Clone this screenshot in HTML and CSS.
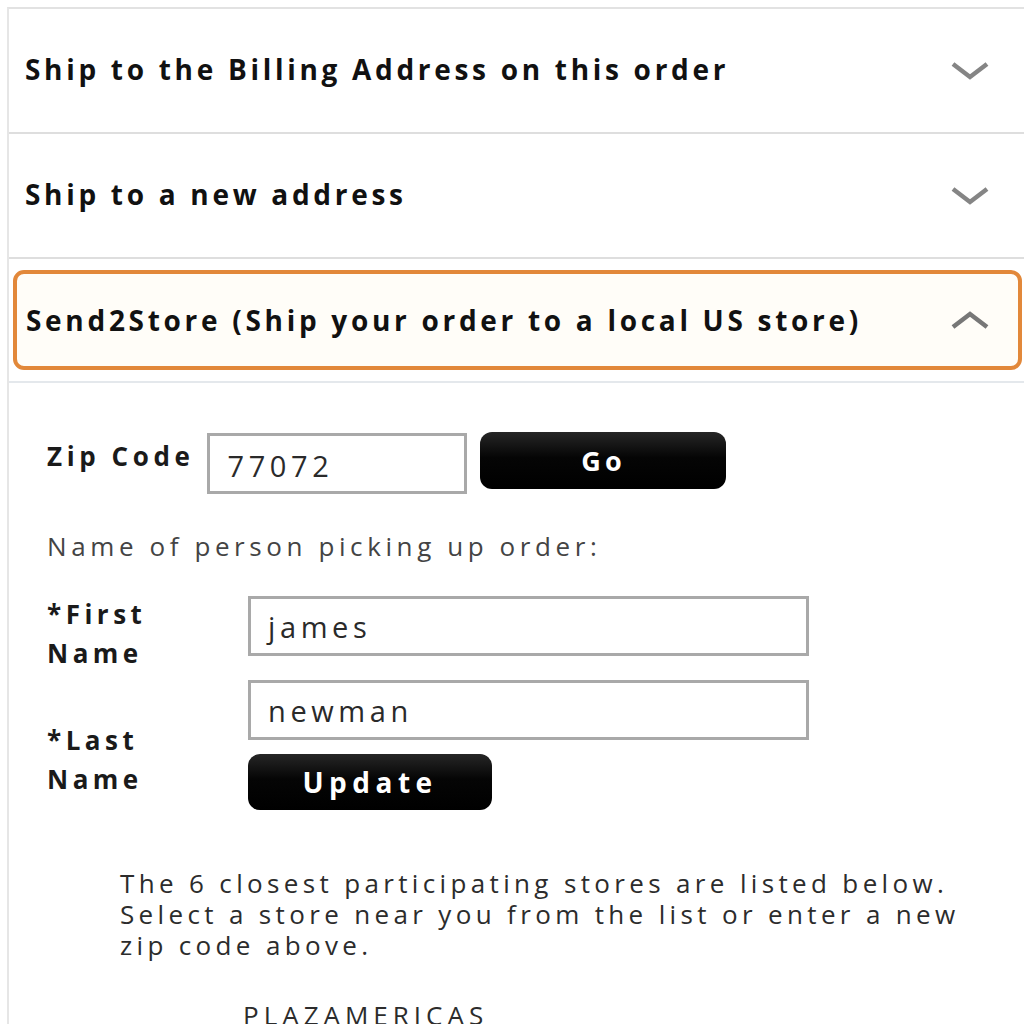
FILE: index.html
```html
<!DOCTYPE html>
<html>
<head>
<meta charset="utf-8">
<link rel="stylesheet" href="styles.css">
</head>
<body>
<div class="page">
  <div class="acc-row">
    <span class="acc-title">Ship to the Billing Address on this order</span>
    <svg class="chev" width="40" height="22" viewBox="0 0 40 22"><path d="M3 4 L20 17 L37 4" fill="none" stroke="#858585" stroke-width="4.5"/></svg>
  </div>
  <div class="acc-row">
    <span class="acc-title">Ship to a new address</span>
    <svg class="chev" width="40" height="22" viewBox="0 0 40 22"><path d="M3 4 L20 17 L37 4" fill="none" stroke="#858585" stroke-width="4.5"/></svg>
  </div>
  <div class="acc-active-wrap">
    <div class="acc-active">
      <span class="acc-title">Send2Store (Ship your order to a local US store)</span>
      <svg class="chev up" width="40" height="22" viewBox="0 0 40 22"><path d="M3 18 L20 5 L37 18" fill="none" stroke="#777" stroke-width="4.5"/></svg>
    </div>
  </div>
  <div class="content">
    <div class="zip-row">
      <span class="label">Zip Code</span>
      <div class="input zip">77072</div>
      <div class="btn go">Go</div>
    </div>
    <div class="hint">Name of person picking up order:</div>
    <div class="name-grid">
      <div class="label first">*First<br>Name</div>
      <div class="input name">james</div>
      <div class="label last">*Last<br>Name</div>
      <div class="last-col">
        <div class="input name">newman</div>
        <div class="btn update">Update</div>
      </div>
    </div>
    <p class="info">The 6 closest participating stores are listed below.<br>Select a store near you from the list or enter a new<br>zip code above.</p>
    <div class="store">PLAZAMERICAS</div>
  </div>
</div>
</body>
</html>
```

FILE: styles.css
```css
html, body {
  margin: 0;
  padding: 0;
  background: #fff;
  overflow: hidden;
}
body {
  font-family: "Open Sans", "DejaVu Sans", sans-serif;
  color: #1a1a1a;
}
.page {
  margin: 7px 0 0 7px;
  border-top: 2px solid #e2e2e2;
  border-left: 2px solid #e6e6e6;
  height: 1100px;
}
.acc-row {
  height: 123px;
  border-bottom: 2px solid #dedede;
  display: flex;
  align-items: center;
  justify-content: space-between;
  padding: 0 34px 0 16px;
}
.acc-title {
  font-weight: 700;
  font-size: 28px;
  letter-spacing: 3.7px;
  color: #111;
  white-space: nowrap;
  margin-top: -3px;
}
.chev { display: block; }
.acc-active-wrap {
  padding: 11px 0 11px 4px;
  border-bottom: 2px solid #e4e8ec;
}
.acc-active {
  height: 92px;
  margin-right: 2px;
  border: 4px solid #e2883a;
  border-radius: 11px;
  background: #fffdf8;
  display: flex;
  align-items: center;
  justify-content: space-between;
  padding: 0 28px 0 9px;
}
.acc-active .acc-title { margin-top: 0; }
.content {
  padding: 49px 0 0 38px;
}
.zip-row {
  display: flex;
  align-items: center;
  gap: 13px;
  height: 62px;
}
.label {
  font-weight: 700;
  font-size: 26px;
  letter-spacing: 4.5px;
  color: #1a1a1a;
  line-height: 39px;
  white-space: nowrap;
}
.zip-row .label { margin-top: -14px; letter-spacing: 4.6px; }
.input {
  box-sizing: border-box;
  border: 3px solid #a9a9a9;
  background: #fff;
  font-size: 29px;
  color: #2a2a2a;
  letter-spacing: 4.6px;
  display: flex;
  align-items: center;
  padding-left: 17px;
}
.input.zip {
  width: 260px;
  height: 61px;
  padding-top: 4px;
}
.btn {
  background: linear-gradient(#262626 0%, #050505 45%, #000 100%);
  color: #fff;
  font-weight: 700;
  border-radius: 12px;
  display: flex;
  align-items: center;
  justify-content: center;
}
.btn.go {
  width: 246px;
  height: 57px;
  font-size: 27px;
  letter-spacing: 4px;
  margin-top: -6px;
}
.hint {
  margin-top: 32px;
  font-size: 26px;
  color: #444;
  letter-spacing: 4.6px;
  line-height: 40px;
  white-space: nowrap;
}
.name-grid {
  margin-top: 30px;
  display: grid;
  grid-template-columns: 201px 561px;
  grid-template-rows: 60px auto;
  row-gap: 24px;
}
.label.first { margin-top: -1px; }
.label.last { margin-top: 41px; }
.input.name {
  width: 561px;
  height: 60px;
}
.btn.update {
  margin-top: 14px;
  width: 244px;
  height: 56px;
  font-size: 28px;
  letter-spacing: 5.5px;
}
.info {
  margin: 58px 0 0 73px;
  font-size: 26px;
  line-height: 31px;
  color: #2c2c2c;
  letter-spacing: 4.35px;
  white-space: nowrap;
}
.store {
  margin: 36px 0 0 196px;
  font-size: 26px;
  color: #2c2c2c;
  letter-spacing: 5px;
}
```
